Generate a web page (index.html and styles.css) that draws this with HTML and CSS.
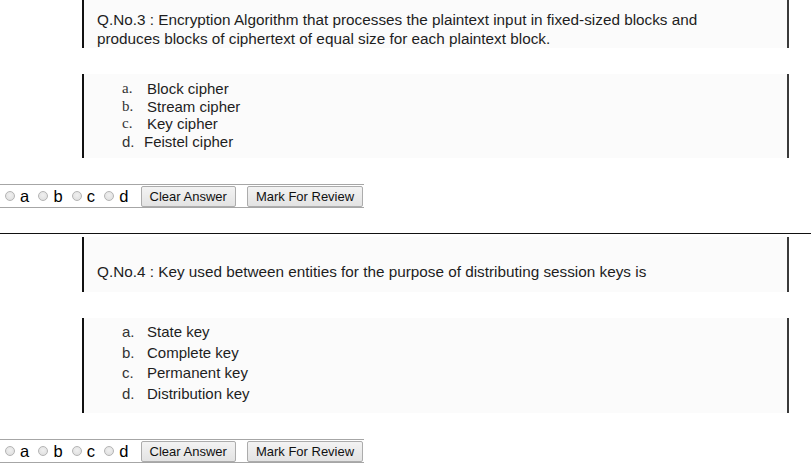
FILE: index.html
```html
<!DOCTYPE html>
<html lang="en">
<head>
<meta charset="utf-8">
<title>Questions</title>
<link rel="stylesheet" href="styles.css">
</head>
<body>
<div class="question">
  <div class="panel qtext q3">Q.No.3 : Encryption Algorithm that processes the plaintext input in fixed-sized blocks and produces blocks of ciphertext of equal size for each plaintext block.</div>
  <div class="panel opts opts3">
    <div class="opt"><span class="mk serif">a.</span><span>Block cipher</span></div>
    <div class="opt"><span class="mk serif">b.</span><span>Stream cipher</span></div>
    <div class="opt"><span class="mk serif">c.</span><span>Key cipher</span></div>
    <div class="opt"><span class="mk narrow">d.</span><span>Feistel cipher</span></div>
  </div>
  <div class="bar">
    <label class="choice"><input type="radio" name="q3">a</label>
    <label class="choice"><input type="radio" name="q3">b</label>
    <label class="choice"><input type="radio" name="q3">c</label>
    <label class="choice"><input type="radio" name="q3">d</label>
    <button class="btn first">Clear Answer</button>
    <button class="btn">Mark For Review</button>
  </div>
</div>
<hr class="sep">
<div class="question">
  <div class="panel qtext q4">Q.No.4 : Key used between entities for the purpose of distributing session keys is</div>
  <div class="panel opts opts4">
    <div class="opt"><span class="mk">a.</span><span>State key</span></div>
    <div class="opt"><span class="mk">b.</span><span>Complete key</span></div>
    <div class="opt"><span class="mk">c.</span><span>Permanent key</span></div>
    <div class="opt"><span class="mk">d.</span><span>Distribution key</span></div>
  </div>
  <div class="bar">
    <label class="choice"><input type="radio" name="q4">a</label>
    <label class="choice"><input type="radio" name="q4">b</label>
    <label class="choice"><input type="radio" name="q4">c</label>
    <label class="choice"><input type="radio" name="q4">d</label>
    <button class="btn first">Clear Answer</button>
    <button class="btn">Mark For Review</button>
  </div>
</div>
</body>
</html>
```

FILE: styles.css
```css
html, body {
  margin: 0;
  padding: 0;
  background: #fff;
}
body {
  font-family: "Liberation Sans", Arial, sans-serif;
  color: #000;
  width: 811px;
  height: 471px;
  overflow: hidden;
}
.question {
  display: flex;
  flex-direction: column;
  align-items: flex-start;
}
.panel {
  box-sizing: border-box;
  margin-left: 82px;
  width: 707px;
  background: #fbfbfb;
  border-left: 2px solid #111;
  border-right: 2px solid #3a3a3a;
  color: #1e1e1e;
}
.qtext {
  font-size: 15.3px;
  line-height: 19px;
  padding-left: 13px;
  padding-right: 60px;
}
.q3 {
  height: 48px;
  padding-top: 10px;
}
.q4 {
  height: 55px;
  margin-top: 3px;
  padding-top: 25px;
}
.opts {
  margin-top: 26px;
  font-size: 15px;
  padding-left: 38px;
}
.opts3 {
  height: 84px;
  line-height: 17.5px;
  padding-top: 6px;
}
.opts4 {
  height: 95px;
  line-height: 20.7px;
  padding-top: 4px;
}
.opt {
  display: flex;
}
.mk {
  width: 25px;
  color: #333;
}
.mk.serif {
  font-family: "Liberation Serif", "Times New Roman", serif;
}
.mk.narrow {
  width: 22px;
}
.bar {
  margin-top: 26px;
  display: flex;
  align-items: center;
  height: 22px;
  border-top: 1px solid #a6a6a6;
  border-bottom: 1px solid #a6a6a6;
  padding-right: 1px;
  font-size: 16.5px;
}
.choice {
  display: flex;
  align-items: center;
  margin-right: 4.2px;
  color: #000;
}
.choice input {
  -webkit-appearance: none;
  appearance: none;
  width: 10px;
  height: 10px;
  margin: 0 5px 0 5px;
  border-radius: 50%;
  border: 1px solid #b4b4b4;
  background: radial-gradient(circle at 50% 40%, #f0f0f0 0%, #dcdcdc 100%);
  box-sizing: border-box;
}
.btn {
  height: 21px;
  margin: 0;
  margin-left: 11px;
  padding: 0 8px;
  font-family: "Liberation Sans", Arial, sans-serif;
  font-size: 13px;
  color: #111;
  border: 1px solid #acacac;
  border-radius: 2px;
  background: linear-gradient(#f3f3f3, #e3e3e3);
  box-sizing: border-box;
}
.btn.first {
  margin-left: 8px;
}
.sep {
  margin: 25px 0 0 0;
  border: 0;
  border-top: 1px solid #111;
  height: 0;
  width: 811px;
}
```
